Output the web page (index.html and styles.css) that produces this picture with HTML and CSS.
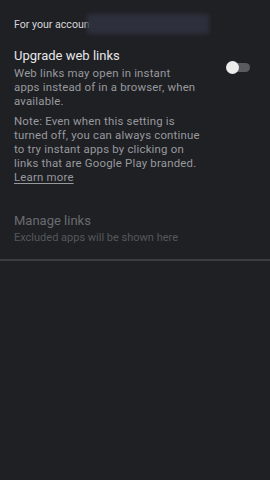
FILE: index.html
```html
<!DOCTYPE html>
<html>
    <head>
        <title>Instant apps</title>
        <link rel="stylesheet" href="styles.css">
    </head>
    <body>
        <div class="page">
            <div class="account">
                <span>For your account</span><span class="redact"></span>
            </div>

            <div class="setting">
                <div class="setting-text">
                    <div class="title">Upgrade web links</div>
                    <div class="desc">Web links may open in instant<br>apps instead of in a browser, when<br>available.</div>
                    <div class="desc note">Note: Even when this setting is<br>turned off, you can always continue<br>to try instant apps by clicking on<br>links that are Google Play branded.</div>
                    <div class="desc"><span class="learn">Learn more</span></div>
                </div>
                <div class="toggle">
                    <div class="track"></div>
                    <div class="thumb"></div>
                </div>
            </div>

            <div class="manage">
                <div class="title dim">Manage links</div>
                <div class="desc dimmer">Excluded apps will be shown here</div>
            </div>

            <div class="divider"></div>
        </div>
    </body>
</html>
```

FILE: styles.css
```css
body { margin: 0; padding: 0; background: #1f2024; font-family: Roboto, "Noto Sans", sans-serif; }
.page { height: 480px; }
.account { padding: 14px 14px 0 14px; height: 20px; display: flex; align-items: center; font-size: 10.6px; color: #d6d7da; }
.redact { display: inline-block; width: 122px; height: 20px; margin-left: -6px; background: #2d303c; filter: blur(2px); }
.setting { display: flex; padding: 13px 14px 0 14px; }
.setting-text { width: 198px; white-space: nowrap; }
.title { font-size: 13px; line-height: 17px; color: #e6e6e8; margin-bottom: 2px; }
.desc { font-size: 11.4px; line-height: 14.2px; letter-spacing: 0.2px; color: #97999d; }
.note { margin-top: 5px; }
.learn { text-decoration: underline; text-underline-offset: 2px; }
.toggle { position: relative; margin-left: 14px; margin-top: 14px; width: 24px; height: 13px; }
.track { position: absolute; left: 6px; top: 2px; width: 18px; height: 9px; border-radius: 5px; background: #5a5b5f; }
.thumb { position: absolute; left: 0; top: 0; width: 13px; height: 13px; border-radius: 50%; background: #ececec; }
.manage { padding: 27px 14px 0 14px; }
.dim { color: #6a6b6f; }
.dimmer { color: #55575b; font-size: 11px; letter-spacing: 0; }
.divider { margin-top: 14px; height: 2px; background: #3b3c40; }
```
